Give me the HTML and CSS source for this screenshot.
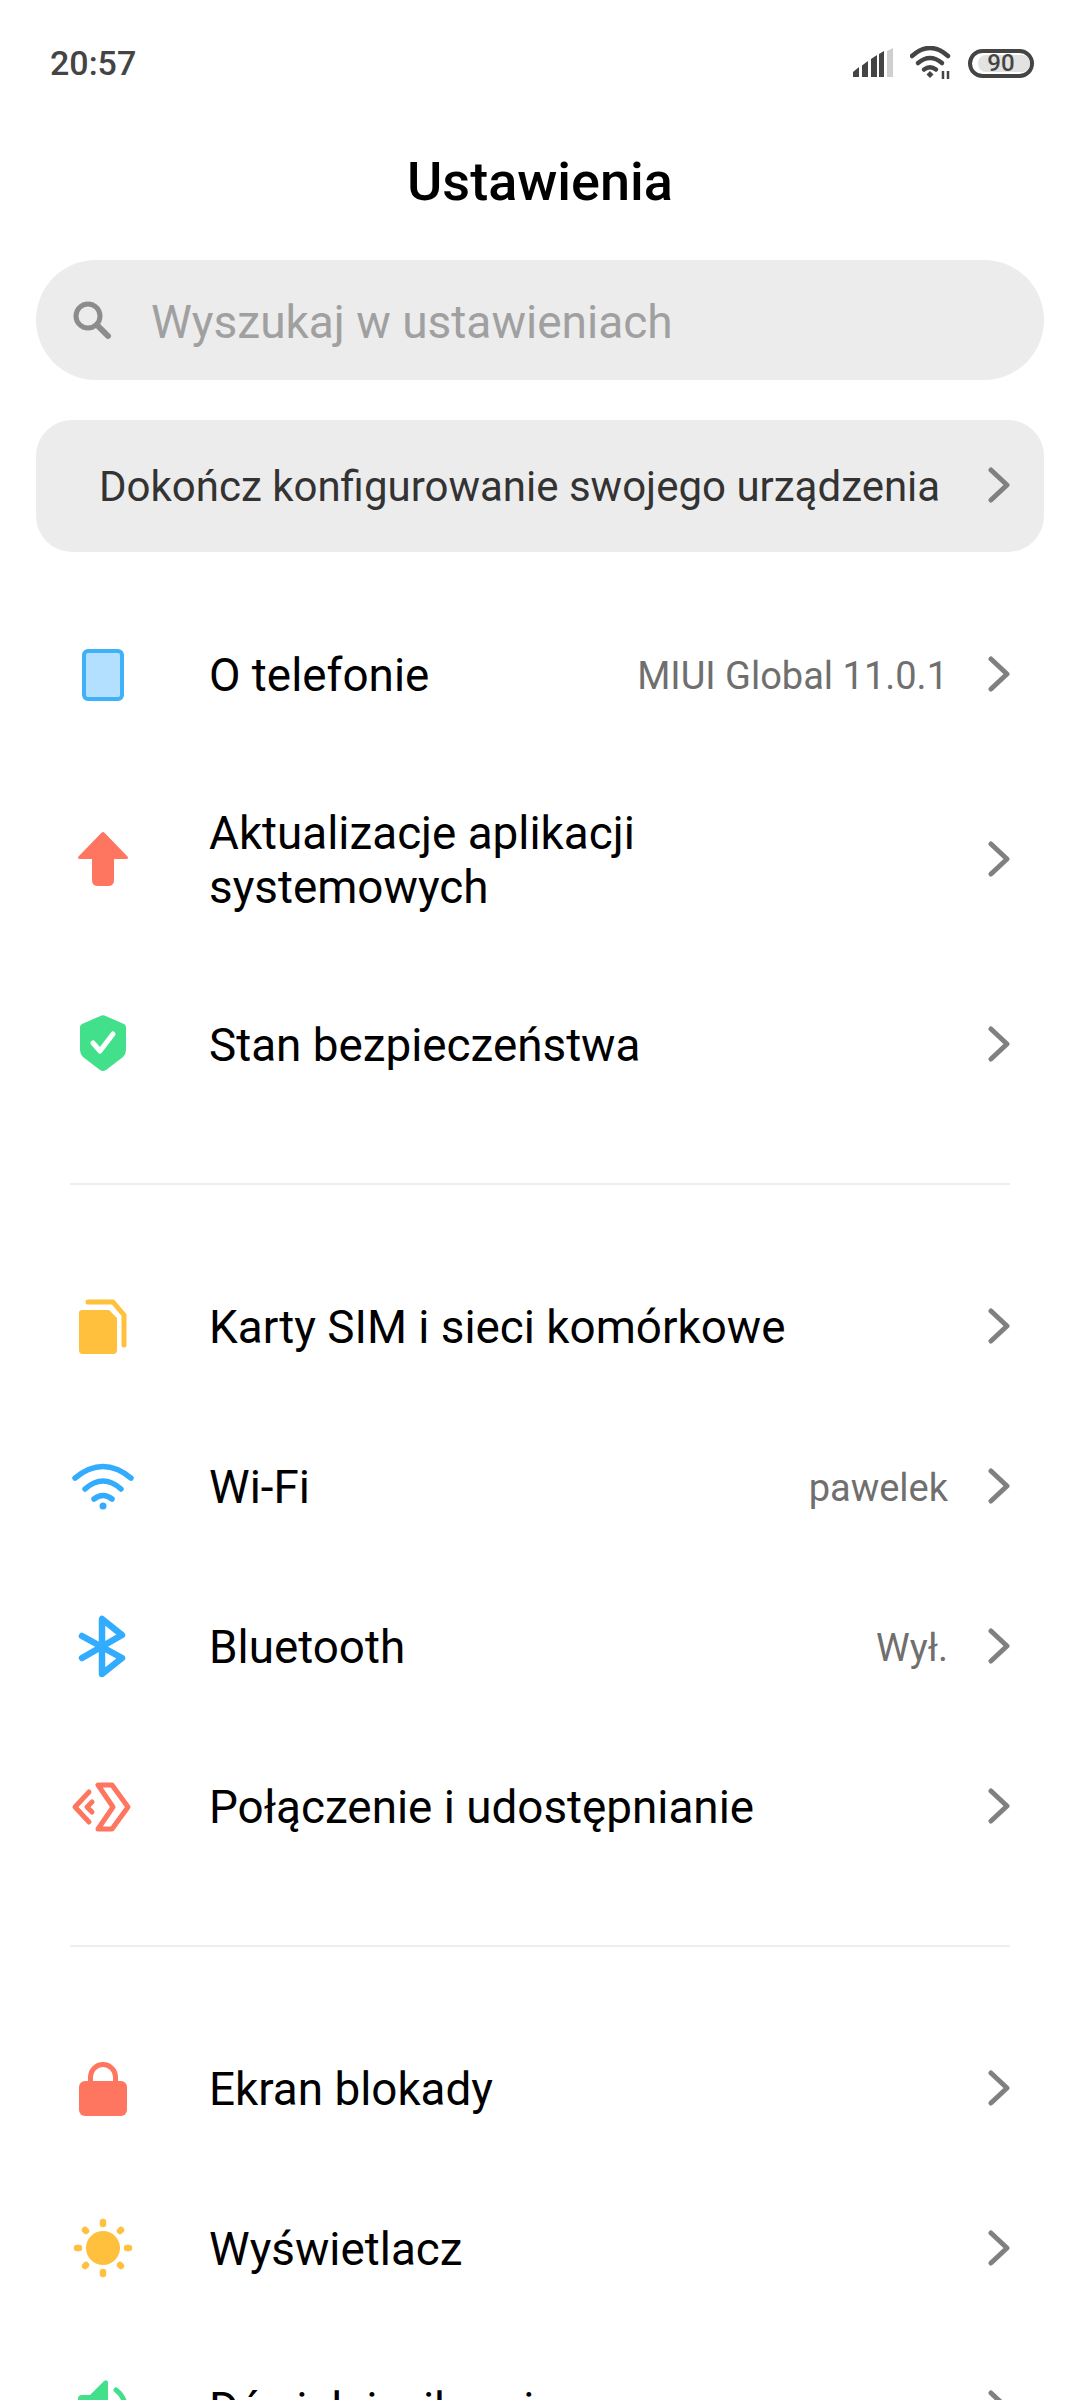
FILE: index.html
```html
<!DOCTYPE html>
<html lang="pl">
<head>
<meta charset="utf-8">
<title>Ustawienia</title>
<link rel="stylesheet" href="styles.css">
</head>
<body>
<div class="status">
  <span class="time">20:57</span>
  <div class="status-icons">
    <svg class="sig" viewBox="0 0 40 30"><path class="d" d="M0 29V24L6 19V29Z"/><path class="d" d="M9 29V17.500L15 13V29Z"/><path class="d" d="M18 29V11L24 7V29Z"/><path class="d" d="M26 29V6L31 3V29Z"/><path class="l" d="M34 29V3L40 0V29Z"/></svg>
    <svg class="swifi" viewBox="0 0 42 34"><g fill="none" stroke="#444" stroke-width="4.500" stroke-linecap="round"><path d="M2 10Q20 -6 38 10"/><path d="M8 17Q20 7 32 17"/><path d="M14 23.500Q20 19 26 23.500"/></g><path d="M20 25L23.500 28.500L20 32L16.500 28.500Z" fill="#444"/><path d="M33 25V33M38 25V33" stroke="#444" stroke-width="2.500"/></svg>
    <div class="batt"><span class="batt-fill">90</span></div>
  </div>
</div>
<h1 class="title">Ustawienia</h1>
<div class="search">
  <svg class="search-ico" viewBox="0 0 40 40"><circle cx="16" cy="16" r="12" fill="none" stroke="#8c8c8c" stroke-width="5"/><path d="M25 25L36 36" stroke="#8c8c8c" stroke-width="6" stroke-linecap="round"/></svg>
  <span class="search-text">Wyszukaj w ustawieniach</span>
</div>
<div class="card">
  <span class="card-text">Dokończ konfigurowanie swojego urządzenia</span>
  <svg class="chev" viewBox="0 0 22 36"><path d="M3 3L19 18L3 33"/></svg>
</div>
<div class="group first">
  <div class="row">
    <svg class="ico" viewBox="0 0 80 80"><rect x="21" y="16" width="38" height="48" rx="4" fill="#b3e0ff" stroke="#3fb1f8" stroke-width="4"/></svg>
    <span class="label">O telefonie</span><span class="value">MIUI Global 11.0.1</span>
    <svg class="chev" viewBox="0 0 22 36"><path d="M3 3L19 18L3 33"/></svg>
  </div>
  <div class="row tall">
    <svg class="ico" viewBox="0 0 80 80"><path d="M38.500 12.700Q40 11.500 41.500 12.700L64.500 36.500Q66 39 63 39H51V60Q51 66 45 66H35Q29 66 29 60V39H17Q14 39 15.500 36.500Z" fill="#ff7660"/></svg>
    <span class="label">Aktualizacje aplikacji<br>systemowych</span>
    <svg class="chev" viewBox="0 0 22 36"><path d="M3 3L19 18L3 33"/></svg>
  </div>
  <div class="row">
    <svg class="ico" viewBox="0 0 80 80"><path d="M38.500 10.500Q40 10 41.500 10.500L61 19Q63 20 63 22V45Q63 49 60 52L43 65Q40 67 37 65L20 52Q17 49 17 45V22Q17 20 19 19Z" fill="#43e08c"/><path d="M30 38L37 46L50 29" fill="none" stroke="#fff" stroke-width="5" stroke-linecap="round" stroke-linejoin="round"/></svg>
    <span class="label">Stan bezpieczeństwa</span>
    <svg class="chev" viewBox="0 0 22 36"><path d="M3 3L19 18L3 33"/></svg>
  </div>
</div>
<div class="divider"></div>
<div class="group">
  <div class="row">
    <svg class="ico" viewBox="0 0 80 80"><path d="M19 23H46L54 31V63Q54 67 50 67H20Q16 67 16 63V26Q16 23 19 23Z" fill="#ffc03e"/><path d="M25 15H50L61 28V58" fill="none" stroke="#ffc03e" stroke-width="5" stroke-linecap="round" stroke-linejoin="round"/></svg>
    <span class="label">Karty SIM i sieci komórkowe</span>
    <svg class="chev" viewBox="0 0 22 36"><path d="M3 3L19 18L3 33"/></svg>
  </div>
  <div class="row">
    <svg class="ico" viewBox="0 0 80 80"><g fill="none" stroke="#32acff" stroke-width="5.500" stroke-linecap="round"><path d="M12 31Q40 8 68 31"/><path d="M22 42Q40 26 58 42"/><path d="M31 52Q40 45 49 52"/></g><circle cx="40" cy="59" r="3.500" fill="#32acff"/></svg>
    <span class="label">Wi-Fi</span><span class="value">pawelek</span>
    <svg class="chev" viewBox="0 0 22 36"><path d="M3 3L19 18L3 33"/></svg>
  </div>
  <div class="row">
    <svg class="ico" viewBox="0 0 80 80"><path d="M19 51L59 28L39 12V67L59 51L19 29" fill="none" stroke="#32acff" stroke-width="6.500" stroke-linecap="round" stroke-linejoin="round"/></svg>
    <span class="label">Bluetooth</span><span class="value">Wył.</span>
    <svg class="chev" viewBox="0 0 22 36"><path d="M3 3L19 18L3 33"/></svg>
  </div>
  <div class="row">
    <svg class="ico" viewBox="0 0 80 80"><g fill="none" stroke="#ff7660" stroke-width="5" stroke-linejoin="round" stroke-linecap="round"><path d="M35 18H49L65 40L49 62H35L50 40Z"/><path d="M26 25L12 40L26 55"/><path d="M29 35L24 40L29 45"/></g></svg>
    <span class="label">Połączenie i udostępnianie</span>
    <svg class="chev" viewBox="0 0 22 36"><path d="M3 3L19 18L3 33"/></svg>
  </div>
</div>
<div class="divider second"></div>
<div class="group">
  <div class="row">
    <svg class="ico" viewBox="0 0 80 80"><path d="M27.500 34V28A12.500 12.500 0 0 1 52.500 28V34" fill="none" stroke="#ff7660" stroke-width="5"/><rect x="16" y="32" width="48" height="35" rx="6" fill="#ff7660"/></svg>
    <span class="label">Ekran blokady</span>
    <svg class="chev" viewBox="0 0 22 36"><path d="M3 3L19 18L3 33"/></svg>
  </div>
  <div class="row">
    <svg class="ico" viewBox="0 0 80 80"><circle cx="40" cy="39" r="17" fill="#ffc03e"/><g stroke="#ffc03e" stroke-width="6.500" stroke-linecap="round"><path d="M40 13V15"/><path d="M40 63V65"/><path d="M14 39H16"/><path d="M64 39H66"/><path d="M22 21L23 22"/><path d="M58 21L57 22"/><path d="M22 57L23 56"/><path d="M58 57L57 56"/></g></svg>
    <span class="label">Wyświetlacz</span>
    <svg class="chev" viewBox="0 0 22 36"><path d="M3 3L19 18L3 33"/></svg>
  </div>
  <div class="row">
    <svg class="ico" viewBox="0 0 80 80"><path d="M19 26H27L41 12Q45 10 45 14V66Q45 70 41 68L27 54H19Q15 54 15 50V30Q15 26 19 26Z" fill="#43e08c"/><path d="M53 21A24 24 0 0 1 53 59" fill="none" stroke="#43e08c" stroke-width="5" stroke-linecap="round"/></svg>
    <span class="label">Dźwięk i wibracje</span>
    <svg class="chev" viewBox="0 0 22 36"><path d="M3 3L19 18L3 33"/></svg>
  </div>
</div>
</body>
</html>
```
FILE: styles.css
```css
html, body {
  margin: 0;
  padding: 0;
  height: 2400px;
  overflow: hidden;
  background: #fff;
  font-family: Roboto, sans-serif;
}
.status {
  height: 126px;
  display: flex;
  align-items: center;
  justify-content: space-between;
  padding: 0 46px 0 50px;
  box-sizing: border-box;
}
.time {
  font-size: 34px;
  font-weight: 500;
  color: #444;
}
.status-icons {
  display: flex;
  align-items: center;
}
.sig {
  width: 40px;
  height: 30px;
  margin-right: 17px;
}
.d { fill: #444; }
.l { fill: #cfcfcf; }
.swifi {
  width: 42px;
  height: 34px;
  margin-right: 16px;
}
.batt {
  width: 66px;
  height: 29px;
  box-sizing: border-box;
  border: 4px solid #444;
  border-radius: 15px;
  padding: 2px 0 2px 6px;
  display: flex;
}
.batt-fill {
  flex: 1;
  background: #e2e2e2;
  border-radius: 8px;
  padding-right: 6px;
  font-size: 24px;
  line-height: 17px;
  font-weight: 500;
  color: #444;
  text-align: center;
}
.title {
  margin: 0;
  height: 112px;
  line-height: 112px;
  text-align: center;
  font-size: 54px;
  font-weight: 500;
  color: #000;
}
.search {
  margin: 22px 36px 0;
  height: 120px;
  border-radius: 60px;
  background: #ececec;
  display: flex;
  align-items: center;
  padding-left: 36px;
  font-size: 46px;
  color: #a0a0a0;
}
.search-text {
  padding-top: 3px;
}
.search-ico {
  width: 40px;
  height: 40px;
  margin-right: 39px;
}
.card {
  margin: 40px 36px 0;
  height: 132px;
  border-radius: 36px;
  background: #ececec;
  display: flex;
  align-items: center;
  padding: 0 34px 0 63px;
}
.card-text {
  flex: 1;
  font-size: 42px;
  color: #333;
}
.group.first { margin-top: 43px; }
.row {
  height: 160px;
  display: flex;
  align-items: center;
  padding-right: 70px;
}
.row.tall { height: 210px; }
.ico {
  width: 80px;
  height: 80px;
  margin-left: 63px;
  margin-right: 66px;
  flex: none;
}
.label {
  flex: 1;
  font-size: 45.800px;
  line-height: 54px;
  padding-top: 2px;
  color: #000;
}
.value {
  font-size: 38px;
  padding-top: 2px;
  color: #6f6f6f;
  margin-right: 40px;
}
.chev {
  width: 22px;
  height: 36px;
  margin-bottom: 3px;
  flex: none;
}
.chev path {
  fill: none;
  stroke: #808080;
  stroke-width: 5;
  stroke-linecap: round;
  stroke-linejoin: round;
}
.divider {
  height: 2px;
  margin: 58px 70px 62px;
  background: #eeeeee;
}
.divider.second {
  margin: 58px 70px 62px;
}
```
